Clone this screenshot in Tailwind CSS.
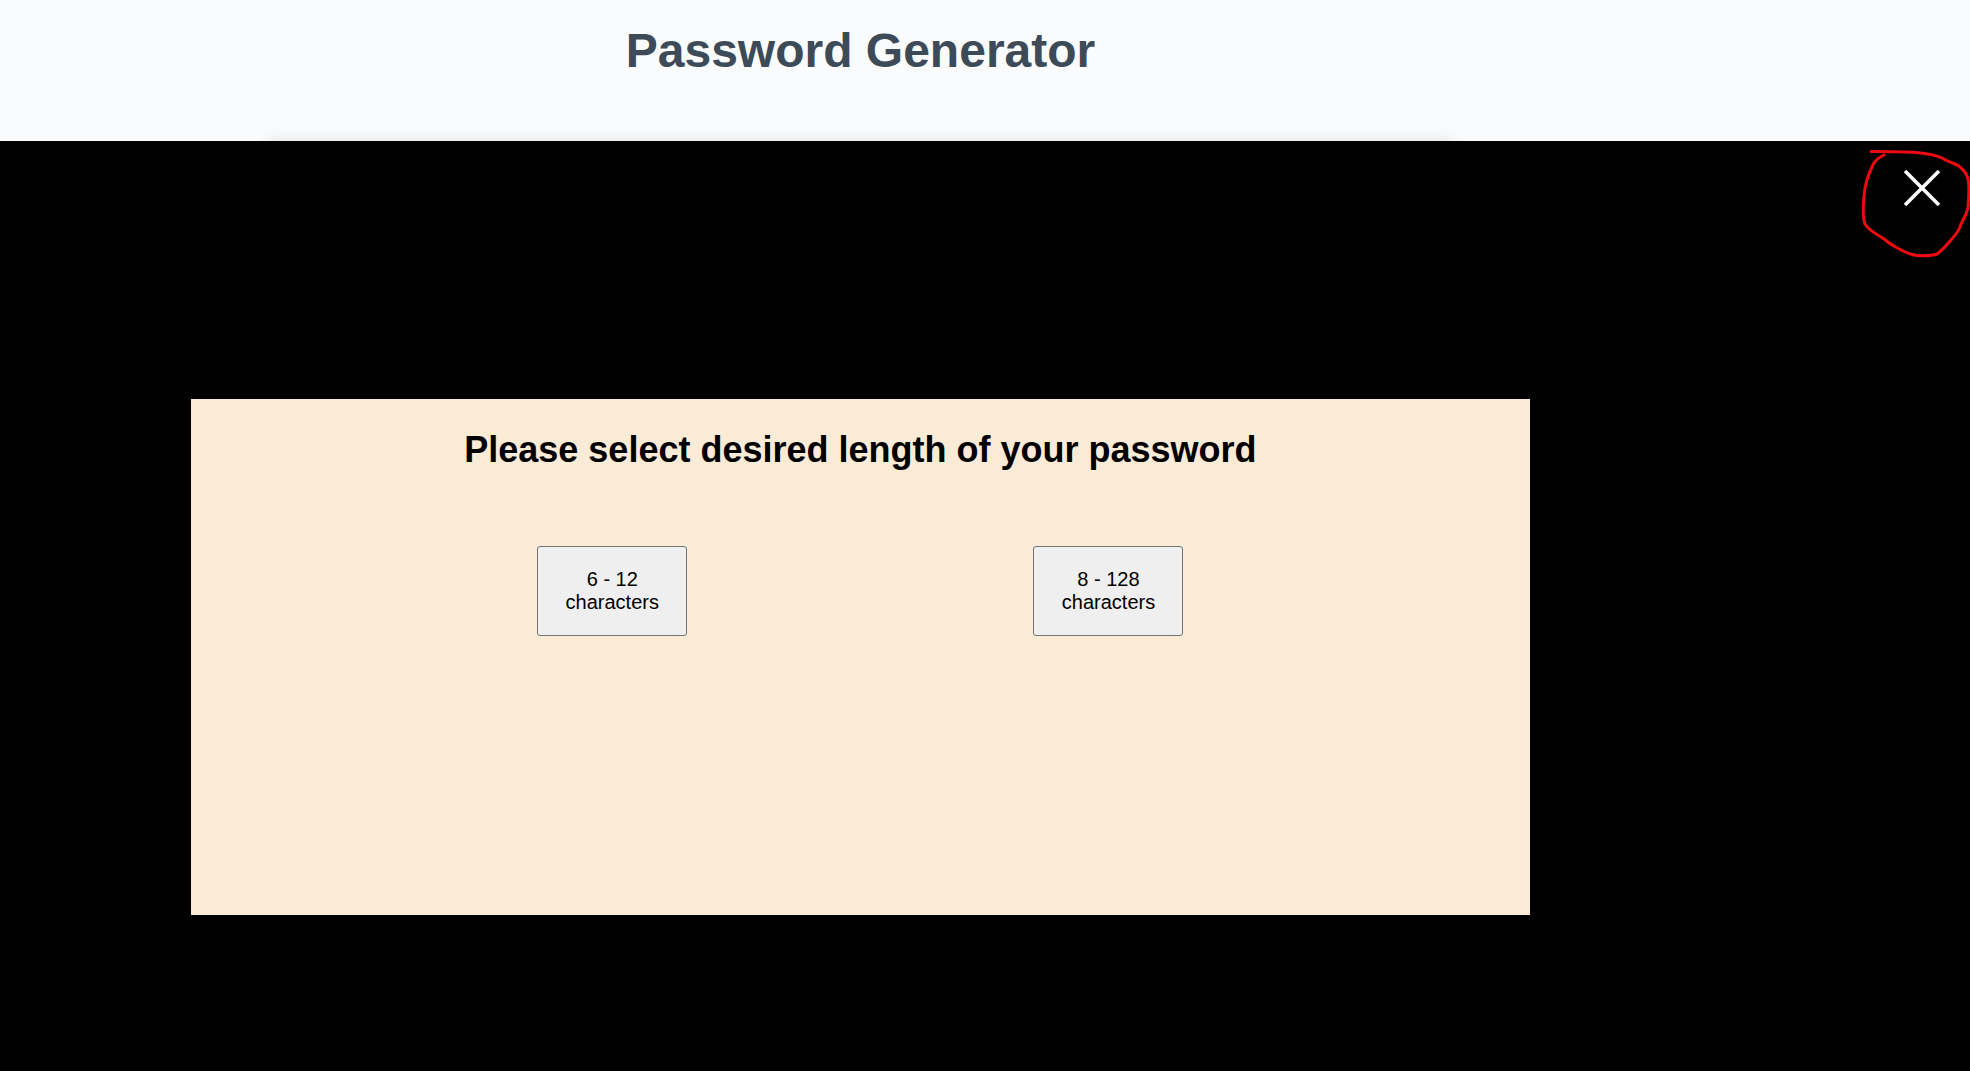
<!DOCTYPE html>
<html lang="en">
<head>
<meta charset="utf-8">
<meta name="viewport" content="width=device-width, initial-scale=1">
<title>Password Generator</title>
<script src="https://cdn.jsdelivr.net/npm/@tailwindcss/browser@4"></script>
</head>
<body class="flex min-h-screen flex-col bg-[#fafbfd] font-['Liberation_Sans',Arial,sans-serif]">
  <header class="w-[87.36%]">
    <h1 class="pt-6 pb-[63px] text-center text-[48px] leading-[54px] font-bold text-[#3d4a57]">Password Generator</h1>
    <!-- Top edge of the generator card; its shadow shows above the overlay -->
    <div class="mx-auto -mb-10 h-10 w-[69%] shadow-[0_2px_16px_rgba(0,0,0,0.15)]"></div>
  </header>

  <main class="relative flex-1 bg-black pt-[258px] pb-16">
    <button type="button" aria-label="Close" class="absolute top-6 right-6 p-1">
      <svg class="size-10" viewBox="0 0 40 40" fill="none" stroke="#fff" stroke-width="3.6" aria-hidden="true"><path d="M3 2 37 36M37 2 3 36"/></svg>
    </button>
    <!-- Hand-drawn ring round the close button -->
    <svg class="pointer-events-none absolute top-0 right-0 h-[140px] w-[130px]" viewBox="0 11 130 140" fill="none" stroke="#ee0a10" stroke-width="3" stroke-linecap="round" stroke-linejoin="round" aria-hidden="true">
      <path d="M31 21.500C45 21.500 64 21.500 76 22.500C86 23.500 96 25 102 28C108 32 116 33.500 120 37C125 41 128 46 128.500 52C129.500 62 128.500 70 128 77C127 84 123 90 121 94C119 102 114 106 111 110C107 115 101 121 97 124C91 126 78 126.500 72 124.500C63 122 51 115 44 109C37 104 29 101 25 94C22 87 23.500 72 24 66C25 54 28 45 32 37C34 30 40 27 44 25"/>
    </svg>

    <section class="ml-[9.7%] min-h-[516px] w-[67.95%] bg-[#faebd7] pt-[30px]">
      <h2 class="text-center text-[36px] leading-[42px] font-bold text-black">Please select desired length of your password</h2>
      <div class="mt-[75px] flex justify-evenly">
        <button type="button" class="h-[90px] w-[150px] rounded-[3px] border border-[#767676] bg-[#efefef] px-6 text-[20px] leading-[23px] text-black">6 - 12 characters</button>
        <button type="button" class="h-[90px] w-[150px] rounded-[3px] border border-[#767676] bg-[#efefef] px-6 text-[20px] leading-[23px] text-black">8 - 128 characters</button>
      </div>
    </section>
  </main>
</body>
</html>
